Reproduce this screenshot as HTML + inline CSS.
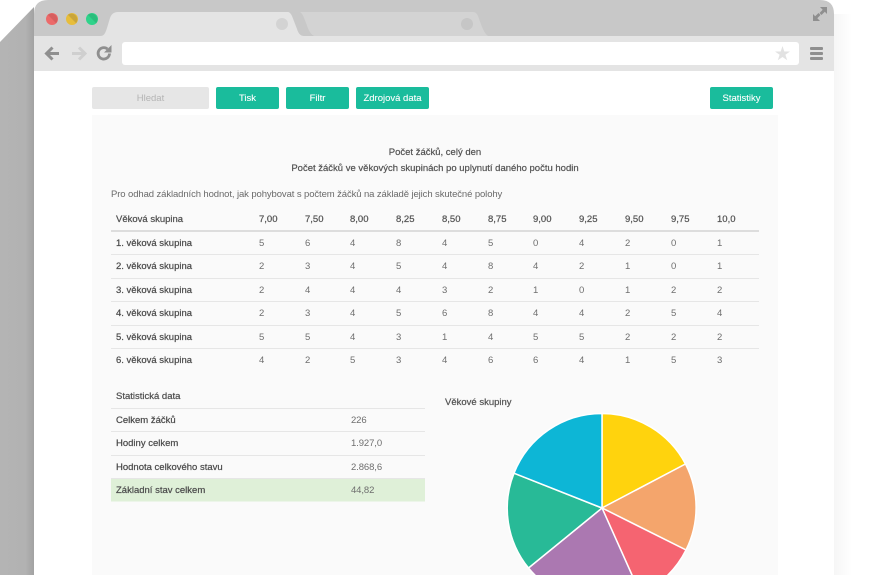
<!DOCTYPE html>
<html lang="cs"><head><meta charset="utf-8"><title>Statistiky</title>
<style>
html,body{margin:0;padding:0;background:#fff}
body{width:883px;height:575px;overflow:hidden;position:relative;font-family:"Liberation Sans",sans-serif;font-size:9.5px;color:#555}
.a{position:absolute}
.sb{font-size:9.5px;color:#4a4a4a;-webkit-text-stroke:.25px #666}
.btn{position:absolute;top:87px;height:22px;line-height:23px;background:#1abc9c;color:#fff;text-align:center;border-radius:2px;font-size:9.5px;-webkit-text-stroke:.1px #fff}
.r{position:absolute;left:111px;width:648px;height:23.5px;border-bottom:1px solid #e6e6e6;box-sizing:border-box;line-height:23px}
.r span{position:absolute;top:0;white-space:nowrap;color:#6e6e6e}
.r span.l{left:5px;color:#444;-webkit-text-stroke:.25px #5a5a5a}
.r span:nth-child(2){left:148px}.r span:nth-child(3){left:194px}.r span:nth-child(4){left:239px}.r span:nth-child(5){left:285px}.r span:nth-child(6){left:331px}.r span:nth-child(7){left:377px}.r span:nth-child(8){left:422px}.r span:nth-child(9){left:468px}.r span:nth-child(10){left:514px}.r span:nth-child(11){left:560px}.r span:nth-child(12){left:606px}
.h{border-bottom:2px solid #ddd}
.h span{color:#4a4a4a!important;-webkit-text-stroke:.25px #666;top:1px!important}
.s{position:absolute;left:111px;width:314px;height:23.6px;border-bottom:1px solid #e6e6e6;box-sizing:border-box;line-height:24px}
.s span{position:absolute;top:0;white-space:nowrap;left:240px;color:#6e6e6e;letter-spacing:-.1px}
.s span.l{left:5px;color:#444;-webkit-text-stroke:.25px #5a5a5a;letter-spacing:0}
</style></head><body>
<svg class="a" style="left:0;top:0" width="883" height="575" viewBox="0 0 883 575">
<defs>
<linearGradient id="sh" x1="0" x2="1" y1="0" y2="0"><stop offset="0" stop-color="#b4b4b4"/><stop offset=".75" stop-color="#b2b2b2"/><stop offset="1" stop-color="#a2a2a2"/></linearGradient>
<linearGradient id="sr" x1="0" x2="1" y1="0" y2="0"><stop offset="0" stop-color="#f6f6f6"/><stop offset="1" stop-color="#fff"/></linearGradient>
</defs>
<path d="M0 42 L34 7 L34 575 L0 575Z" fill="url(#sh)"/>
<rect x="834" y="14" width="18" height="561" fill="url(#sr)"/>
<path d="M34 575V14Q34 0 48 0H820Q834 0 834 14V575Z" fill="#fff"/>
<path d="M34 36V14Q34 0 48 0H820Q834 0 834 14V36Z" fill="#c8c8c8"/>
<rect x="34" y="36" width="800" height="35" fill="#e4e4e4"/>
<path d="M300 12H473C476 12 477 14 478 16C481 24 483 32 488 36H314C309 33 308 28 306 23C304 18 303 14 300 12Z" fill="#d3d3d3"/>
<path d="M100 36C104 36 105 34 107 28L110 18Q112 12 118 12H288Q290 12 292 16L297 29Q299 36 304 36Z" fill="#e4e4e4"/>
<circle cx="282" cy="24" r="6" fill="#d3d3d3"/>
<circle cx="467" cy="24" r="6" fill="#c6c6c6"/>
<circle cx="52" cy="19" r="6" fill="#ec6a6a"/><path d="M47.8 14.8A6 6 0 0 1 56.2 23.2Z" fill="#d65f5f"/>
<circle cx="72" cy="19" r="6" fill="#e7bd3b"/><path d="M67.8 14.8A6 6 0 0 1 76.2 23.2Z" fill="#c9a53a"/>
<circle cx="92" cy="19" r="6" fill="#2fd38a"/><path d="M87.8 14.8A6 6 0 0 1 96.2 23.2Z" fill="#2bbd7c"/>
<rect x="122" y="42" width="677" height="23" rx="3" fill="#fff"/>
<path d="M59 53.500H47M52.500 47.500L46.500 53.500L52.500 59.500" fill="none" stroke="#8f8f8f" stroke-width="3"/>
<path d="M72 53.500H84.500M79 47.500L85 53.500L79 59.500" fill="none" stroke="#cfcfcf" stroke-width="3"/>
<path d="M109.500 53.500A5.700 5.700 0 1 1 107.500 49" fill="none" stroke="#8f8f8f" stroke-width="2.800"/>
<path d="M104 52.500H111.500V45Z" fill="#8f8f8f"/>
<path d="M782.500 46L784.300 51.500H790L785.400 54.800L787.200 60.300L782.500 57L777.800 60.300L779.600 54.800L775 51.500H780.700Z" fill="#e2e2e2"/>
<rect x="810" y="47" width="13" height="3" rx="1" fill="#8f8f8f"/><rect x="810" y="52" width="13" height="3" rx="1" fill="#8f8f8f"/><rect x="810" y="57" width="13" height="3" rx="1" fill="#8f8f8f"/>
<path d="M820 7H827V14L824.800 11.800L821.500 15L819.500 13L822.700 9.700Z" fill="#8f8f8f"/>
<path d="M813 21V14L815.200 16.200L818.500 13L820.500 15L817.300 18.300L820 21Z" fill="#8f8f8f"/>
<rect x="92" y="115" width="686" height="460" fill="#fafafa"/>
<rect x="111" y="478" width="314" height="23.500" fill="#dff0d8"/>
<g stroke="#fff" stroke-width="1.500">
<path d="M602 508V413.500A94.500 94.500 0 0 1 685.500 464Z" fill="#ffd30d"/>
<path d="M602 508L685.500 464A94.500 94.500 0 0 1 686 550Z" fill="#f4a56c"/>
<path d="M602 508L686 550A94.500 94.500 0 0 1 640.500 594Z" fill="#f56471"/>
<path d="M602 508L640.500 594A94.500 94.500 0 0 1 528.500 568Z" fill="#ab78b1"/>
<path d="M602 508L528.500 568A94.500 94.500 0 0 1 514 473.200Z" fill="#28ba97"/>
<path d="M602 508L514 473.200A94.500 94.500 0 0 1 602 413.500Z" fill="#0db6d6"/>
</g>
</svg>

<div class="btn" style="left:92px;width:117px;background:#e6e6e6;color:#b4b4b4;-webkit-text-stroke:0">Hledat</div>
<div class="btn" style="left:216px;width:63px">Tisk</div>
<div class="btn" style="left:286px;width:63px">Filtr</div>
<div class="btn" style="left:356px;width:73px">Zdrojová data</div>
<div class="btn" style="left:710px;width:63px">Statistiky</div>

<div class="a sb" style="left:92px;width:686px;top:147px;text-align:center">Počet žáčků, celý den</div>
<div class="a sb" style="left:92px;width:686px;top:163px;text-align:center">Počet žáčků ve věkových skupinách po uplynutí daného počtu hodin</div>
<div class="a" style="left:111px;top:189px;color:#6a6a6a;letter-spacing:-.1px">Pro odhad základních hodnot, jak pohybovat s počtem žáčků na základě jejich skutečné polohy</div>

<div class="r h" style="top:207px;height:25px"><span class="l">Věková skupina</span><span>7,00</span><span>7,50</span><span>8,00</span><span>8,25</span><span>8,50</span><span>8,75</span><span>9,00</span><span>9,25</span><span>9,50</span><span>9,75</span><span>10,0</span></div>
<div class="r" style="top:231.500px"><span class="l">1. věková skupina</span><span>5</span><span>6</span><span>4</span><span>8</span><span>4</span><span>5</span><span>0</span><span>4</span><span>2</span><span>0</span><span>1</span></div>
<div class="r" style="top:255px"><span class="l">2. věková skupina</span><span>2</span><span>3</span><span>4</span><span>5</span><span>4</span><span>8</span><span>4</span><span>2</span><span>1</span><span>0</span><span>1</span></div>
<div class="r" style="top:278.500px"><span class="l">3. věková skupina</span><span>2</span><span>4</span><span>4</span><span>4</span><span>3</span><span>2</span><span>1</span><span>0</span><span>1</span><span>2</span><span>2</span></div>
<div class="r" style="top:302px"><span class="l">4. věková skupina</span><span>2</span><span>3</span><span>4</span><span>5</span><span>6</span><span>8</span><span>4</span><span>4</span><span>2</span><span>5</span><span>4</span></div>
<div class="r" style="top:325.500px"><span class="l">5. věková skupina</span><span>5</span><span>5</span><span>4</span><span>3</span><span>1</span><span>4</span><span>5</span><span>5</span><span>2</span><span>2</span><span>2</span></div>
<div class="r" style="top:349px;border-bottom:0"><span class="l">6. věková skupina</span><span>4</span><span>2</span><span>5</span><span>3</span><span>4</span><span>6</span><span>6</span><span>4</span><span>1</span><span>5</span><span>3</span></div>

<div class="s h" style="top:384px;height:25px"><span class="l">Statistická data</span></div>
<div class="s" style="top:408.500px"><span class="l">Celkem žáčků</span><span>226</span></div>
<div class="s" style="top:432px"><span class="l">Hodiny celkem</span><span>1.927,0</span></div>
<div class="s" style="top:455.500px"><span class="l">Hodnota celkového stavu</span><span>2.868,6</span></div>
<div class="s" style="top:479px;border-bottom:0"><span class="l">Základní stav celkem</span><span>44,82</span></div>

<div class="a sb" style="left:445px;top:397px">Věkové skupiny</div>
</body></html>
